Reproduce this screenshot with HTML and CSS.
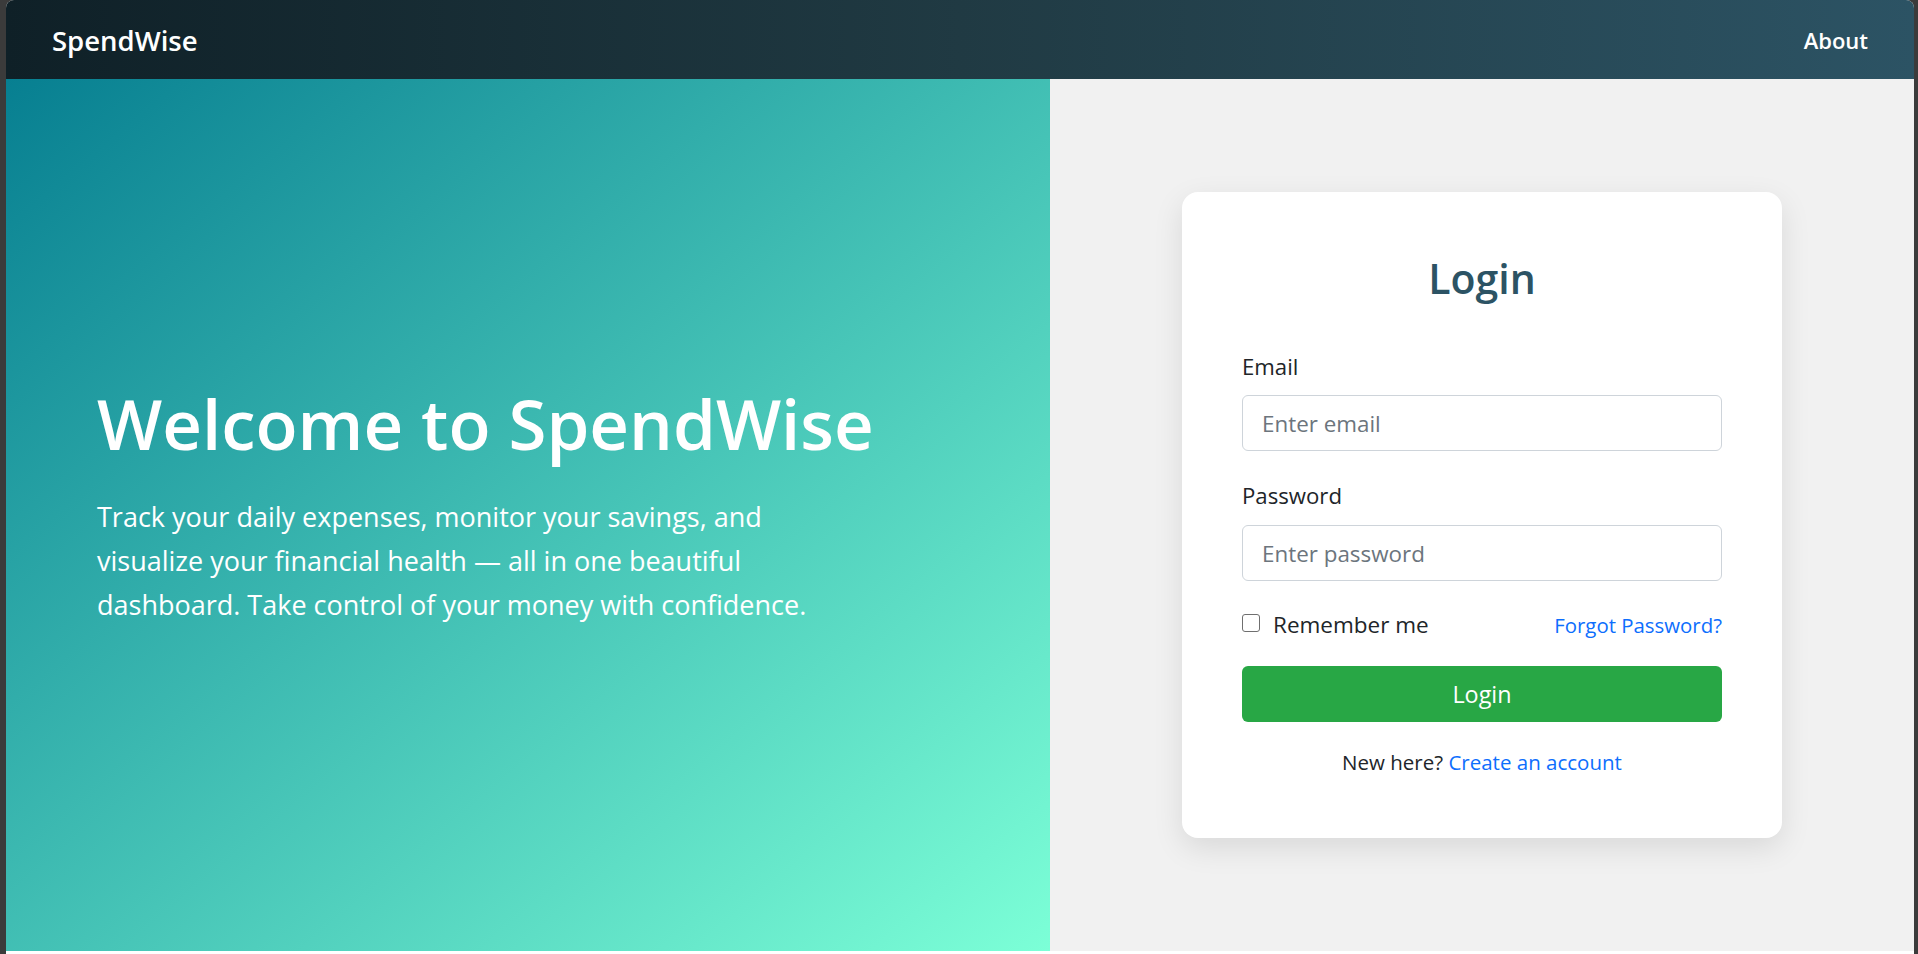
FILE: index.html
```html
<!DOCTYPE html>
<html lang="en">
<head>
<meta charset="utf-8">
<title>SpendWise - Login</title>
<link rel="stylesheet" href="styles.css">
</head>
<body>
<div class="app">
  <nav class="navbar">
    <a class="brand" href="#">SpendWise</a>
    <a class="nav-link" href="#">About</a>
  </nav>
  <main class="main">
    <section class="hero">
      <h1 class="hero-title">Welcome to SpendWise</h1>
      <p class="hero-text">Track your daily expenses, monitor your savings, and visualize your financial health — all in one beautiful dashboard. Take control of your money with confidence.</p>
    </section>
    <section class="auth">
      <form class="card">
        <h2 class="card-title">Login</h2>
        <label class="label" for="email">Email</label>
        <input class="input" id="email" type="email" placeholder="Enter email">
        <label class="label label-pw" for="password">Password</label>
        <input class="input" id="password" type="password" placeholder="Enter password">
        <div class="row">
          <label class="check"><input type="checkbox" class="checkbox"><span>Remember me</span></label>
          <a class="link forgot" href="#">Forgot Password?</a>
        </div>
        <button class="btn" type="button">Login</button>
        <p class="signup">New here? <a class="link" href="#">Create an account</a></p>
      </form>
    </section>
  </main>
</div>
</body>
</html>
```
FILE: styles.css
```css
* { box-sizing: border-box; }
html, body { margin: 0; padding: 0; }
body {
  background: #3b3b3b;
  font-family: "Open Sans", "Noto Sans", sans-serif;
  color: #212529;
  width: 1918px;
  height: 954px;
  overflow: hidden;
}
.app {
  margin: 0 4px 0 6px;
  height: 954px;
  background: #ffffff;
  border-radius: 8px 8px 0 0;
  overflow: hidden;
  display: flex;
  flex-direction: column;
}
.navbar {
  height: 79px;
  flex: none;
  display: flex;
  align-items: center;
  justify-content: space-between;
  padding: 1px 46px 0 46px;
  background: linear-gradient(to right, #0f2027, #203a43, #2c5364);
}
.brand {
  color: #ffffff;
  text-decoration: none;
  font-size: 27.5px;
  font-weight: 600;
}
.nav-link {
  color: #ffffff;
  text-decoration: none;
  font-size: 22px;
  font-weight: 600;
}
.main {
  height: 872px;
  flex: none;
  display: flex;
}
.hero {
  width: 1044px;
  flex: none;
  background: linear-gradient(to bottom right, #077f91, #7cffd7);
  color: #ffffff;
  display: flex;
  flex-direction: column;
  justify-content: center;
  padding: 0 0 19px 91px;
}
.hero-title {
  margin: 0 0 32px 0;
  font-size: 69px;
  font-weight: 600;
  line-height: 79px;
}
.hero-text {
  margin: 0;
  max-width: 750px;
  font-size: 27px;
  line-height: 44px;
}
.auth {
  flex: 1;
  background: #f1f1f1;
  display: flex;
  align-items: center;
  justify-content: center;
}
.card {
  width: 600px;
  height: 646px;
  background: #ffffff;
  border-radius: 16px;
  box-shadow: 0 10px 30px rgba(0, 0, 0, 0.1);
  padding: 62px 60px 62px 60px;
  display: flex;
  flex-direction: column;
}
.card-title {
  margin: 0 0 50px 0;
  text-align: center;
  color: #2c5364;
  font-size: 41px;
  font-weight: 600;
  line-height: 48px;
}
.label {
  display: block;
  font-size: 22.2px;
  line-height: 30px;
  margin-bottom: 13px;
}
.label-pw { margin-top: 30px; margin-bottom: 14px; }
.input {
  display: block;
  width: 100%;
  height: 56px;
  flex: none;
  border: 1px solid #ced4da;
  border-radius: 6px;
  padding: 0 19px;
  font-family: inherit;
  font-size: 22.4px;
  color: #212529;
  background: #ffffff;
}
.input::placeholder { color: #6c757d; }
.row {
  margin-top: 29px;
  height: 30px;
  flex: none;
  display: flex;
  align-items: center;
  justify-content: space-between;
}
.check {
  display: flex;
  align-items: center;
  font-size: 22.5px;
  line-height: 30px;
}
.checkbox {
  appearance: none;
  -webkit-appearance: none;
  margin: 0 13px 0 0;
  width: 18px;
  height: 18px;
  border: 1.5px solid #6f6f6f;
  border-radius: 3px;
  background: #ffffff;
  position: relative;
  top: -2px;
}
.link { color: #0d6efd; text-decoration: none; }
.forgot { font-size: 20.4px; line-height: 30px; }
.btn {
  margin-top: 26px;
  height: 56px;
  flex: none;
  width: 100%;
  border: none;
  border-radius: 6px;
  background: #28a745;
  color: #ffffff;
  font-family: inherit;
  font-size: 23.4px;
}
.signup {
  margin: 26px 0 0 0;
  text-align: center;
  font-size: 20.5px;
  line-height: 28px;
}
```
